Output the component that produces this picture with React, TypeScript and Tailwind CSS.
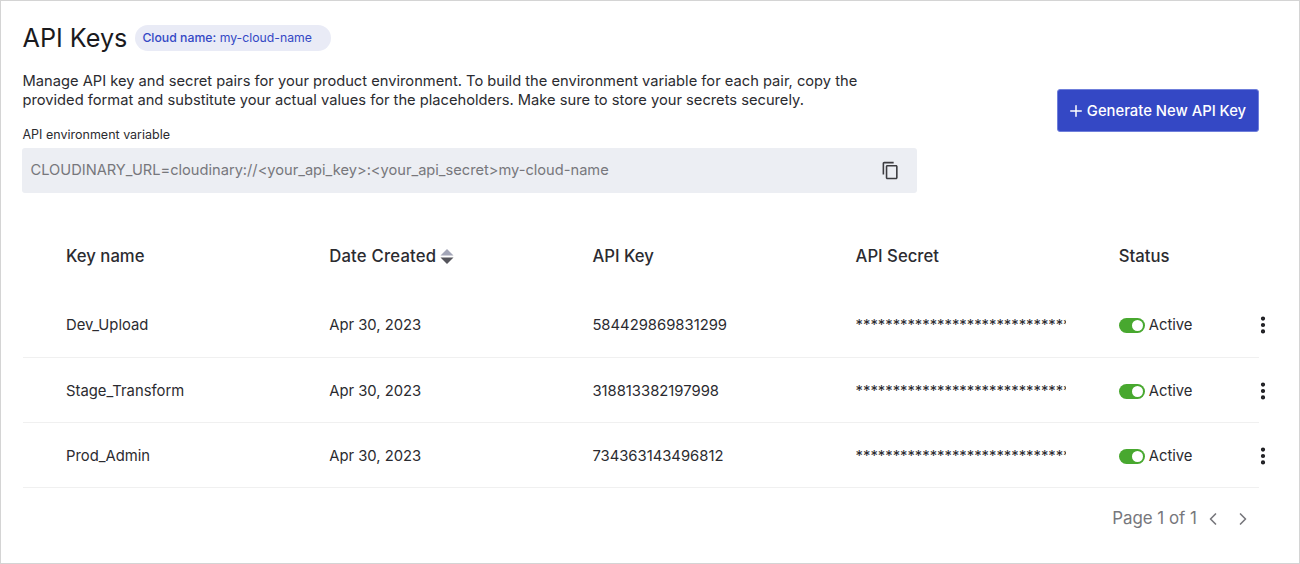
import { ChevronLeft, ChevronRight, EllipsisVertical, Plus } from "lucide-react";

const rows = [
  { name: "Dev_Upload", date: "Apr 30, 2023", apiKey: "584429869831299" },
  { name: "Stage_Transform", date: "Apr 30, 2023", apiKey: "318813382197998" },
  { name: "Prod_Admin", date: "Apr 30, 2023", apiKey: "734363143496812" },
];

const gridCols = "grid grid-cols-[43.5px_263.2px_263.2px_263.2px_263.2px_1fr]";

export default function App() {
  return (
    <div className="h-[564px] w-[1300px] overflow-hidden border border-[#d4d4d4] bg-white font-['Inter',sans-serif] text-[#1a1a1e]">
      <div className="pl-[21.5px] pr-[40px] pt-[21px]">
        {/* Header */}
        <div className="flex h-[32px] items-center gap-[8px]">
          <h1 className="text-[25.2px] leading-[32px] font-normal">API Keys</h1>
          <span className="flex h-[26px] w-[196px] items-center rounded-full bg-[#e9ebf6] pl-[7px] text-[12.25px] text-[#3448c5]">
            <span className="font-medium">Cloud name:</span>&nbsp;my-cloud-name
          </span>
        </div>

        <div className="flex items-start justify-between">
          <div className="w-[894px]">
            <p className="mt-[18px] w-[850px] text-[14.7px] leading-[19px] text-[#2b2b30]">
              Manage API key and secret pairs for your product environment. To build the environment variable for each pair, copy the provided format and substitute your actual values for the placeholders. Make sure to store your secrets securely.
            </p>
            <div className="mt-[17px] text-[12.5px] leading-[16px] text-[#2b2b30]">API environment variable</div>
            <div className="mt-[5px] -ml-[0.5px] flex h-[45px] items-center justify-between rounded-[3px] bg-[#eceef3] pl-[8.5px] pr-[17px] text-[14.65px] text-[#77777c]">
              <span className="pt-px">{"CLOUDINARY_URL=cloudinary://<your_api_key>:<your_api_secret>my-cloud-name"}</span>
              <svg className="h-[19px] w-[19px] text-[#3c3c40]" viewBox="0 0 24 24" fill="currentColor">
                <path d="M16 1H4c-1.1 0-2 .9-2 2v14h2V3h12V1zm3 4H8c-1.1 0-2 .9-2 2v14c0 1.1.9 2 2 2h11c1.1 0 2-.9 2-2V7c0-1.1-.9-2-2-2zm0 16H8V7h11v14z" />
              </svg>
            </div>
          </div>
          <button className="mt-[35px] flex h-[43px] w-[202px] items-center justify-center gap-[2px] rounded-[3px] border border-[#6f7fdb] bg-[#3448c5] pr-[3px] pt-px text-[14.8px] font-medium text-white">
            <Plus className="h-[18px] w-[18px]" strokeWidth={2} />
            Generate New API Key
          </button>
        </div>

        {/* Table */}
        <div className={`${gridCols} mt-[41px] h-[45px] items-center text-[16.7px] font-medium text-[#2b2b30]`}>
          <div />
          <div>Key name</div>
          <div className="flex items-center gap-[4px]">
            <span className="tracking-[0.2px]">Date Created</span>
            <svg width="14" height="17" viewBox="0 0 14 17">
              <path d="M7 1 L13.5 7.5 H0.5 Z" fill="#a3a6b8" />
              <path d="M0.5 9.5 H13.5 L7 16 Z" fill="#55555c" />
            </svg>
          </div>
          <div>API Key</div>
          <div>API Secret</div>
          <div>Status</div>
        </div>

        <div className="mt-[14px]">
          {rows.map((row) => (
            <div key={row.name} className={`${gridCols} h-[65px] items-center border-b border-[#f0f0f0] pt-[2px] text-[14.8px] text-[#2b2b30] first:pt-0`}>
              <div />
              <div>{row.name}</div>
              <div>{row.date}</div>
              <div>{row.apiKey}</div>
              <div className="w-[210px] overflow-hidden whitespace-nowrap">**********************************</div>
              <div className="flex items-center">
                <span className="flex h-[15px] w-[26px] items-center justify-end rounded-full bg-[#48a82f] pr-[2px]">
                  <span className="h-[11px] w-[11px] rounded-full bg-white" />
                </span>
                <span className="ml-[4px]">Active</span>
                <EllipsisVertical className="ml-[59px] h-[22px] w-[22px] text-[#1a1a1e]" strokeWidth={2.6} />
              </div>
            </div>
          ))}
        </div>

        {/* Pagination */}
        <div className="mt-[18px] flex items-center justify-end pr-[6px] text-[16.9px] text-[#77777c]">
          <span>Page 1 of 1</span>
          <ChevronLeft className="ml-[6px] h-[20px] w-[20px]" />
          <ChevronRight className="ml-[10px] h-[20px] w-[20px]" />
        </div>
      </div>
    </div>
  );
}
